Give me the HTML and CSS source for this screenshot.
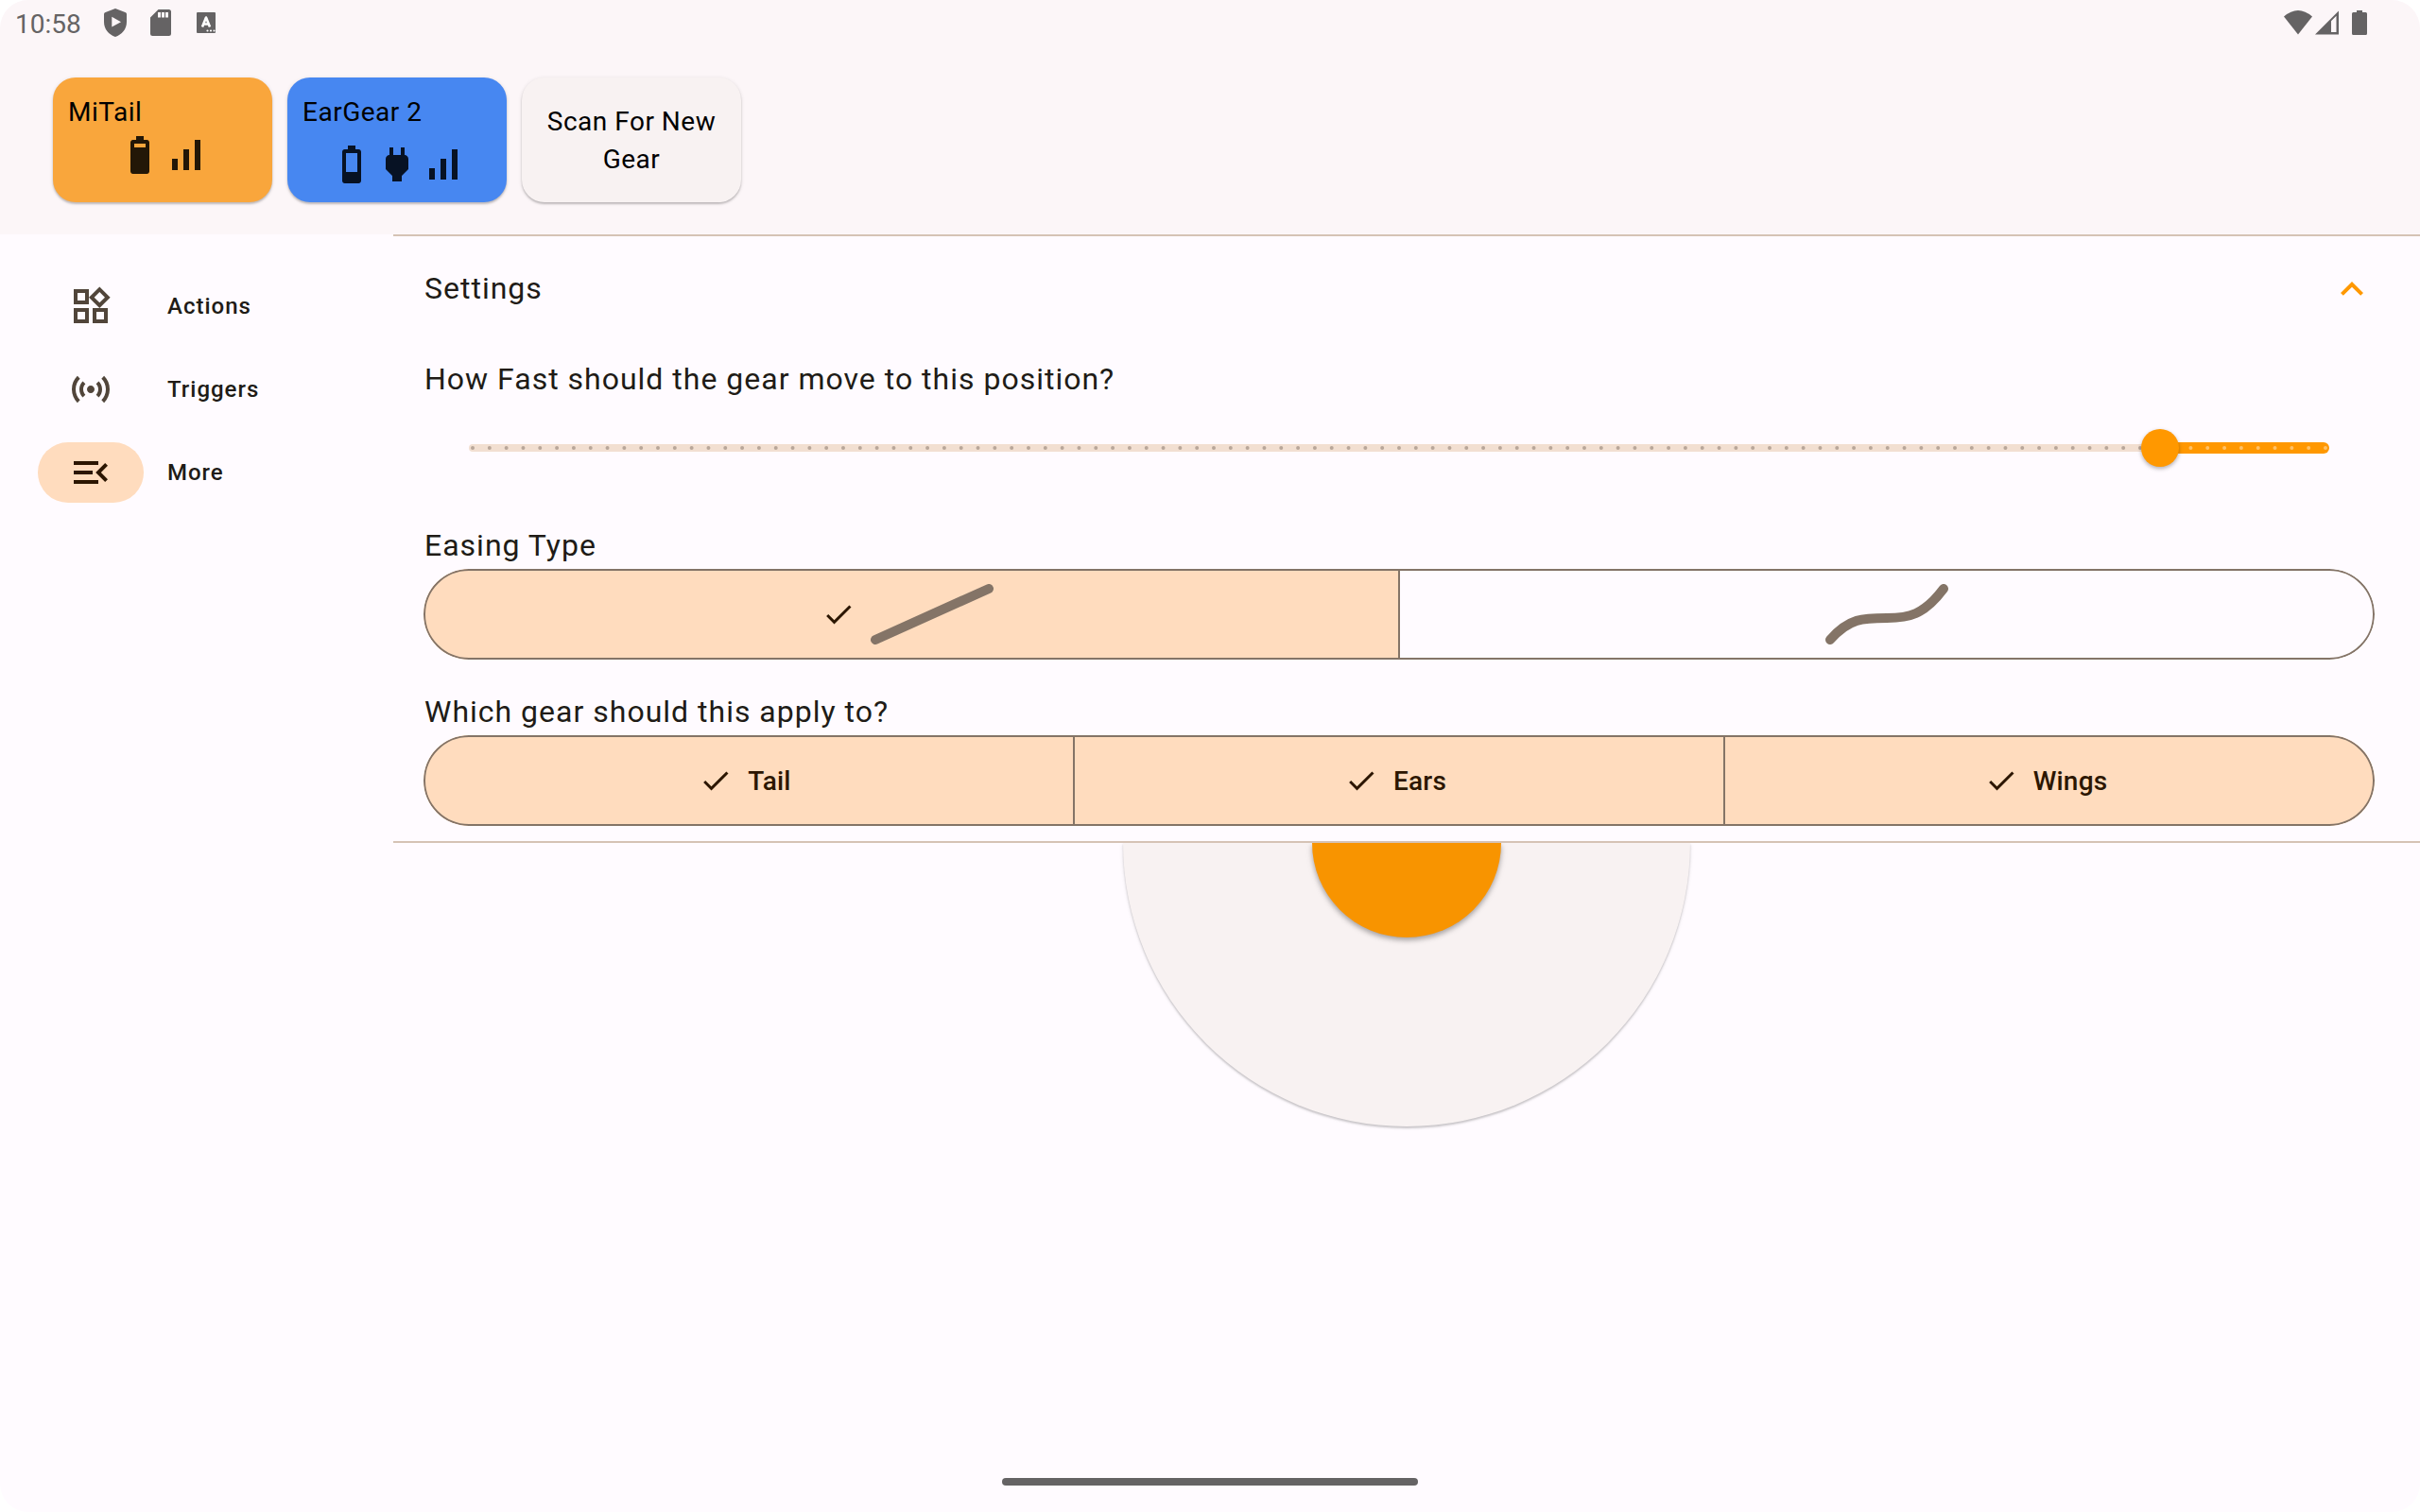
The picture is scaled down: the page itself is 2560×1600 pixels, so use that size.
FILE: index.html
```html
<!DOCTYPE html>
<html lang="en">
<head>
<meta charset="utf-8">
<title>Gear Control</title>
<link rel="stylesheet" href="styles.css">
</head>
<body>
<div class="screen">
  <header class="top">
    <div class="status">
      <span class="clock">10:58</span>
      <svg class="st-shield" width="24" height="30" viewBox="0 0 24 30"><path fill-rule="evenodd" d="M12 0L23 4.200Q24 4.600 24 6V14C24 22 19 27.500 12 30C5 27.500 0 22 0 14V6Q0 4.600 1 4.200ZM8.300 8.700V19.600L18 14.200Z"/></svg>
      <svg class="st-sd" width="22" height="28" viewBox="0 0 22 28"><path fill-rule="evenodd" d="M8.500 0H19.500Q22 0 22 2.500V25.500Q22 28 19.500 28H2.500Q0 28 0 25.500V8.500ZM8 3V8.500H11V3ZM12 3V8.500H15V3ZM16 3V8.500H19V3Z"/></svg>
      <svg class="st-a" width="20" height="22" viewBox="0 0 20 22"><rect width="20" height="22" rx="1"/><path class="cut" d="M6 15.500L10 5.500L14 15.500M7.500 12.500H12.500"/><path class="cut-dots" d="M11.500 19.500h0M15 19.500h0M18.500 19.500h0"/></svg>
      <span class="spacer"></span>
      <svg class="st-wifi" width="30" height="26" viewBox="0 0 30 26"><path d="M0 6.500Q15 -6.500 30 6.500L15 25.500Z"/></svg>
      <svg class="st-cell" width="26" height="26" viewBox="0 0 26 26"><path fill-rule="evenodd" d="M0 25.500L25 0.500V25.500ZM17 11.300V23H22.500V5.800Z"/></svg>
      <svg class="st-batt" width="16" height="26" viewBox="0 0 16 26"><path d="M5 0H11V2H14.500Q16 2 16 3.500V24.500Q16 26 14.500 26H1.500Q0 26 0 24.500V3.500Q0 2 1.500 2H5Z"/></svg>
    </div>
    <div class="cards">
      <div class="card mitail">
        <span class="name">MiTail</span>
        <div class="icons">
          <svg class="icon" viewBox="0 0 24 24"><path fill-rule="evenodd" d="M15.670 4H14V2h-4v2H8.330C7.600 4 7 4.600 7 5.330v15.330C7 21.400 7.600 22 8.330 22h7.330c.740 0 1.340-.600 1.340-1.330V5.330C17 4.600 16.400 4 15.670 4zM15 8H9V6h6z"/></svg>
          <svg class="icon" viewBox="0 0 24 24"><path d="M17 4h3v16h-3zM5 14h3v6H5zm6-5h3v11h-3z"/></svg>
        </div>
      </div>
      <div class="card eargear">
        <span class="name">EarGear 2</span>
        <div class="icons">
          <svg class="icon" viewBox="0 0 24 24"><path fill-rule="evenodd" d="M15.670 4H14V2h-4v2H8.330C7.600 4 7 4.600 7 5.330v15.330C7 21.400 7.600 22 8.330 22h7.330c.740 0 1.340-.600 1.340-1.330V5.330C17 4.600 16.400 4 15.670 4zM15 16H9V6h6z"/></svg>
          <svg class="icon" viewBox="0 0 24 24"><path d="M16.010 7L16 3h-2v4h-4V3H8v4h-.010C7 6.990 6 7.990 6 8.990v5.490L9.500 18v3h5v-3l3.500-3.510v-5.500c0-1-1-2-1.990-1.990z"/></svg>
          <svg class="icon" viewBox="0 0 24 24"><path d="M17 4h3v16h-3zM5 14h3v6H5zm6-5h3v11h-3z"/></svg>
        </div>
      </div>
      <div class="card scan"><span>Scan For New Gear</span></div>
    </div>
  </header>
  <div class="body">
    <nav class="rail">
      <a class="dest">
        <span class="pill"><svg class="icon" viewBox="0 0 24 24"><path d="M16.660 4.520l2.830 2.830-2.830 2.830-2.830-2.830 2.830-2.830M9 5v4H5V5h4m10 10v4h-4v-4h4M9 15v4H5v-4h4m7.660-13.310L11 7.340 16.660 13l5.660-5.660-5.660-5.650zM11 3H3v8h8V3zm10 10h-8v8h8v-8zm-10 0H3v8h8v-8z"/></svg></span>
        <span>Actions</span>
      </a>
      <a class="dest">
        <span class="pill"><svg class="icon" viewBox="0 0 24 24"><path d="M7.760 16.240C6.670 15.160 6 13.660 6 12s.670-3.160 1.760-4.240l1.420 1.420C8.450 9.900 8 10.900 8 12c0 1.100.450 2.100 1.170 2.830l-1.410 1.410zm8.480 0C17.330 15.160 18 13.660 18 12s-.670-3.160-1.760-4.240l-1.420 1.420C15.550 9.900 16 10.900 16 12c0 1.100-.450 2.100-1.170 2.830l1.410 1.410zM12 10c-1.100 0-2 .900-2 2s.900 2 2 2 2-.900 2-2-.900-2-2-2zm8 2c0 2.210-.900 4.210-2.350 5.650l1.420 1.420C20.880 17.260 22 14.760 22 12s-1.120-5.260-2.930-7.070l-1.420 1.420C19.100 7.790 20 9.790 20 12zM6.350 6.350L4.930 4.930C3.120 6.740 2 9.240 2 12s1.120 5.260 2.930 7.070l1.420-1.420C4.900 16.210 4 14.210 4 12s.900-4.210 2.350-5.650z"/></svg></span>
        <span>Triggers</span>
      </a>
      <a class="dest active">
        <span class="pill"><svg class="icon" viewBox="0 0 24 24"><path d="M3 18h13v-2H3v2zm0-5h10v-2H3v2zm0-7v2h13V6H3zm18 9.590L17.420 12 21 8.410 19.590 7l-5 5 5 5L21 15.590z"/></svg></span>
        <span>More</span>
      </a>
    </nav>
    <main class="content">
      <section class="settings">
        <div class="tile">
          <span>Settings</span>
          <svg class="icon" viewBox="0 0 24 24"><path d="M12 8l-6 6 1.410 1.410L12 10.830l4.590 4.580L18 14z"/></svg>
        </div>
        <div class="label speed">How Fast should the gear move to this position?</div>
        <svg class="slider" width="2064" height="96" viewBox="0 0 2064 96">
          <rect class="track" x="48" y="44" width="1800" height="8" rx="4"/>
          <path class="track-on" d="M1837 42H2010a6 6 0 0 1 0 12H1837Z"/>
          <path class="ticks" d="M52 48H1820"/>
          <path class="ticks-on" d="M1869.450 48H2013"/>
          <circle class="thumb" cx="1837" cy="48" r="20"/>
        </svg>
        <div class="label easing">Easing Type</div>
        <div class="segments two">
          <div class="seg on">
            <svg class="check" viewBox="0 0 24 24"><path d="M9 16.170L4.830 12l-1.420 1.410L9 19 21 7l-1.410-1.410z"/></svg>
            <svg class="curve" width="130" height="64" viewBox="0 0 130 64"><path d="M5 59L125 5"/></svg>
          </div>
          <div class="seg">
            <svg class="curve" width="130" height="64" viewBox="0 0 130 64"><path d="M5 59C25 36 40 36 65 36C88 36 104 33 125 5"/></svg>
          </div>
        </div>
        <div class="label gear">Which gear should this apply to?</div>
        <div class="segments three">
          <div class="seg on"><svg class="check" viewBox="0 0 24 24"><path d="M9 16.170L4.830 12l-1.420 1.410L9 19 21 7l-1.410-1.410z"/></svg><span>Tail</span></div>
          <div class="seg on"><svg class="check" viewBox="0 0 24 24"><path d="M9 16.170L4.830 12l-1.420 1.410L9 19 21 7l-1.410-1.410z"/></svg><span>Ears</span></div>
          <div class="seg on"><svg class="check" viewBox="0 0 24 24"><path d="M9 16.170L4.830 12l-1.420 1.410L9 19 21 7l-1.410-1.410z"/></svg><span>Wings</span></div>
        </div>
      </section>
      <div class="joystick"><div class="pad"><div class="stick"></div></div></div>
    </main>
  </div>
  <footer class="home"><div class="handle"></div></footer>
</div>
</body>
</html>
```

FILE: styles.css
```css
* { box-sizing: border-box; }
body { margin: 0; background: #fff; font-family: Roboto, sans-serif; color: #201b16; }
svg { display: block; flex: none; }
.icon { width: 48px; height: 48px; fill: currentColor; }
.screen { width: 2560px; height: 1600px; display: flex; flex-direction: column; background: #fffbff; border-radius: 30px; overflow: hidden; }

.top { height: 248px; flex: none; background: #fcf6f8; }
.status { height: 48px; display: flex; align-items: flex-start; padding: 0 56px 0 16px; fill: #656364; }
.clock { width: 94px; font-size: 28px; line-height: 32px; margin-top: 10px; color: #656364; }
.spacer { flex: 1; }
.st-shield { margin-top: 9px; }
.st-sd { margin: 10px 0 0 25px; }
.st-a { margin: 13px 0 0 27px; }
.st-wifi { margin-top: 11px; }
.st-cell { margin: 11px 0 0 3px; }
.st-batt { margin: 11px 0 0 13px; }
.cut { fill: none; stroke: #fff; stroke-width: 2.600; stroke-linejoin: round; }
.cut-dots { stroke: #fff; stroke-width: 2.200; stroke-linecap: round; }

.cards { display: flex; gap: 16px; padding: 34px 56px 0; }
.card { width: 232px; height: 132px; border-radius: 24px; font-size: 28px; line-height: 40px; letter-spacing: .5px; color: #000; box-shadow: 0 2px 2px rgba(0,0,0,.18), 0 1px 4px rgba(0,0,0,.12); }
.card .name { display: block; padding: 17px 16px 0; }
.icons { display: flex; justify-content: center; }
.mitail { background: #f9a63c; }
.mitail .icons { margin-top: 1px; color: #231707; }
.eargear { background: #4787f1; }
.eargear .icons { margin-top: 11px; color: #071224; }
.scan { background: #f8f2f2; display: flex; align-items: center; justify-content: center; text-align: center; padding: 2px 16px 0; }

.body { flex: 1; display: flex; min-height: 0; }
.rail { width: 416px; flex: none; padding: 44px 0 0 40px; display: flex; flex-direction: column; gap: 24px; }
.dest { display: flex; align-items: center; gap: 25px; font-size: 24px; font-weight: 500; letter-spacing: 1px; }
.pill { width: 112px; height: 64px; border-radius: 32px; display: flex; align-items: center; justify-content: center; color: #51453a; }
.active .pill { background: #ffdcbe; color: #2c1600; }

.content { flex: 1; }
.settings { height: 644px; padding: 0 48px 0 32px; border-top: 2px solid #d5c3b5; border-bottom: 2px solid #d5c3b5; }
.tile { height: 112px; display: flex; align-items: center; justify-content: space-between; font-size: 32px; letter-spacing: 1px; }
.tile span { padding: 0 0 2px 1px; }
.tile .icon { color: #ff9800; }
.label { font-size: 32px; line-height: 46px; letter-spacing: 1px; padding: 0 0 2px 1px; }
.label.speed { padding-top: 16px; }
.easing { margin-top: 32px; }
.gear { margin-top: 32px; }
.track { fill: #f2dfd1; }
.track-on, .thumb { fill: #ff9800; }
.thumb { filter: drop-shadow(0 2px 2px rgba(0,0,0,.3)); }
.ticks, .ticks-on { fill: none; stroke-width: 4; stroke-linecap: round; stroke-dasharray: 0 17.818; }
.ticks { stroke: #b8a699; }
.ticks-on { stroke: #ffc166; }
.segments { position: relative; height: 96px; display: grid; border-radius: 48px; overflow: hidden; }
.segments.two { grid-template-columns: repeat(2, 1fr); }
.segments.three { grid-template-columns: repeat(3, 1fr); }
.segments::after { content: ""; position: absolute; inset: 0; border: 2px solid #847467; border-radius: 48px; }
.seg { position: relative; display: flex; align-items: center; justify-content: center; gap: 16px; font-size: 28px; font-weight: 500; letter-spacing: .2px; }
.seg + .seg::before { content: ""; position: absolute; left: -1px; top: 0; bottom: 0; width: 2px; background: #847467; }
.seg.on { background: #ffdcbe; color: #2c1600; padding-right: 8px; }
.check { width: 36px; height: 36px; fill: currentColor; }
.curve path { fill: none; stroke: #847467; stroke-width: 10; stroke-linecap: round; }

.joystick { display: flex; justify-content: center; overflow: hidden; height: 320px; }
.pad { width: 600px; height: 300px; border-radius: 0 0 300px 300px; background: #f8f2f2; display: flex; justify-content: center; box-shadow: 0 2px 2px rgba(0,0,0,.16), 0 1px 4px rgba(0,0,0,.1); }
.stick { width: 200px; height: 100px; border-radius: 0 0 100px 100px; background: #f89400; box-shadow: 0 3px 5px rgba(0,0,0,.26), 0 2px 8px rgba(0,0,0,.1); }

.home { height: 40px; flex: none; display: flex; justify-content: center; }
.handle { width: 440px; height: 8px; margin-top: 4px; border-radius: 4px; background: #656364; }
```
